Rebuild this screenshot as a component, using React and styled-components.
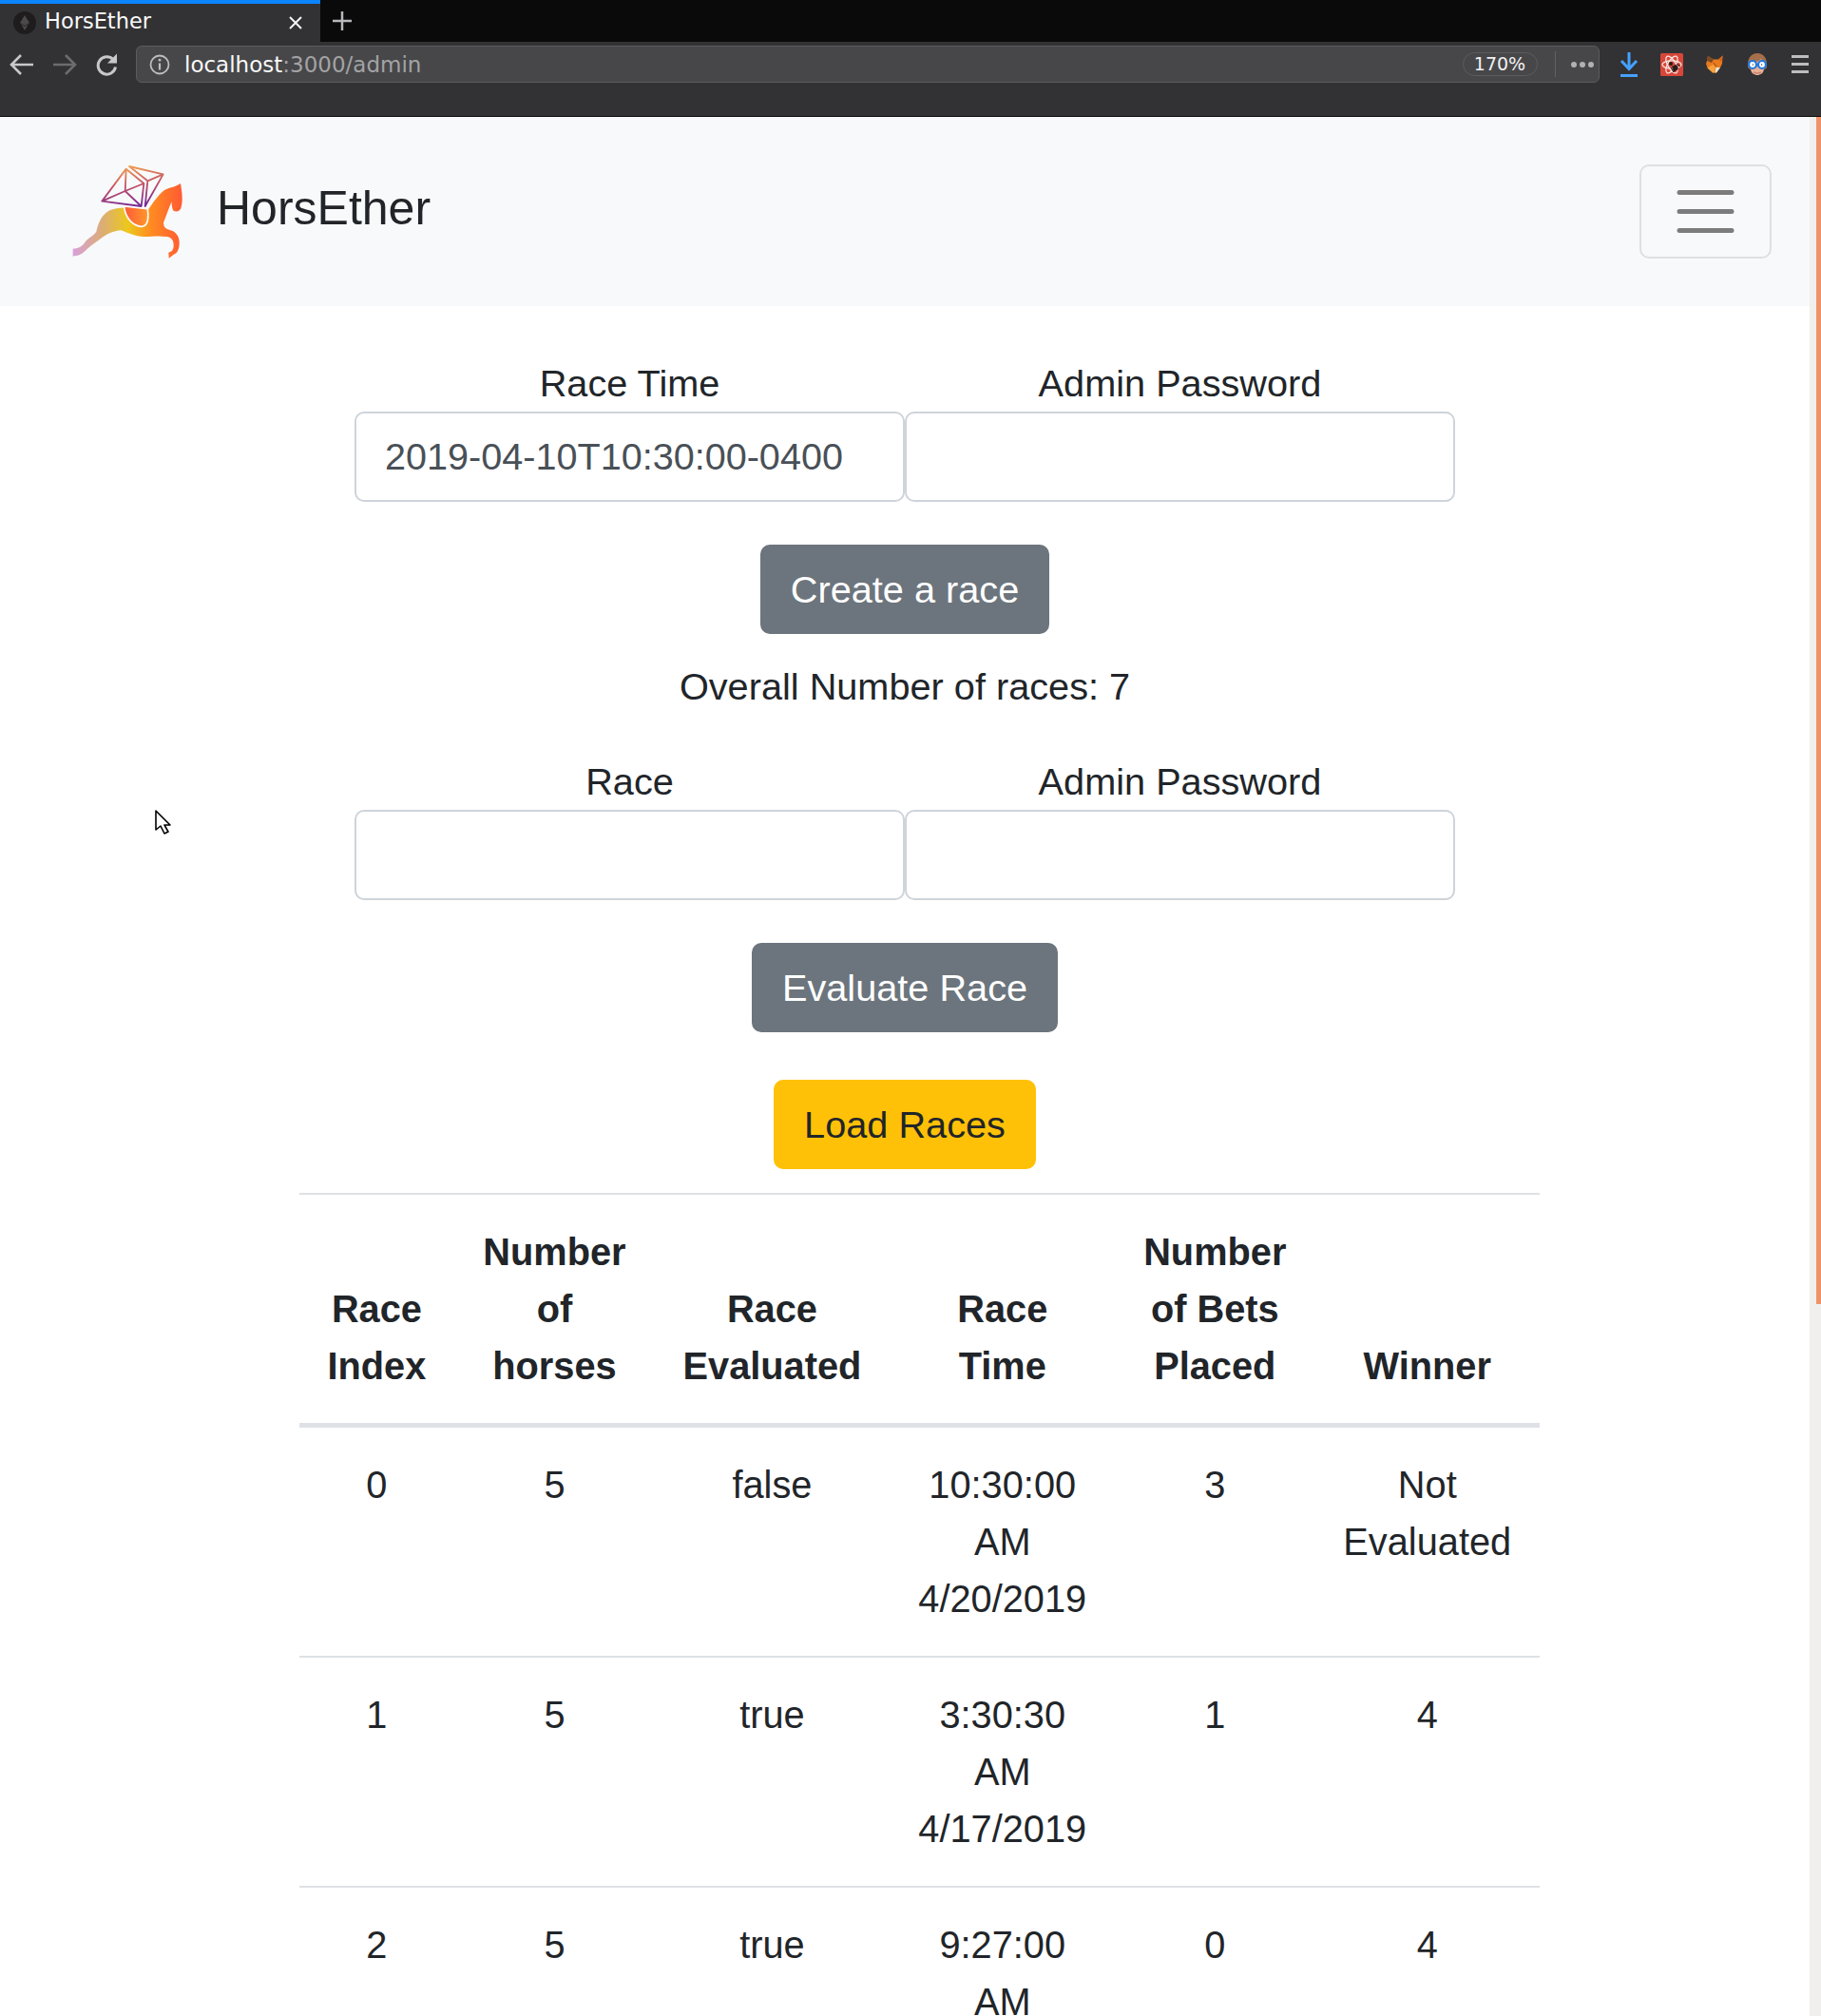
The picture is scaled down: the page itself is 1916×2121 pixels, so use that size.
import React from 'react'
import styled, { createGlobalStyle } from 'styled-components'

const Global = createGlobalStyle`
  html, body { margin: 0; padding: 0; height: 2121px; overflow: hidden; background: #fff; }
  * { box-sizing: border-box; }
`

const Window = styled.div`
  position: relative;
  width: 1916px;
  height: 2121px;
  display: flex;
  flex-direction: column;
  overflow: hidden;
  font-family: "Liberation Sans", Arial, sans-serif;
  color: #212529;
`

/* browser chrome */
const TabBar = styled.div`
  height: 44px;
  background: #0a0a0b;
  display: flex;
  font-family: "DejaVu Sans", sans-serif;
`
const Tab = styled.div`
  width: 337px;
  background: #323234;
  border-top: 4px solid #0a84ff;
  display: flex;
  align-items: center;
  padding: 0 18px 0 14px;
  color: #f9f9fa;
  font-size: 22.5px;
`
const TabTitle = styled.span`
  margin: -4px 0 0 9px;
  flex: 1;
`
const NewTab = styled.div`
  width: 46px;
  display: flex;
  align-items: center;
  justify-content: center;
`
const Toolbar = styled.div`
  height: 79px;
  background: #323234;
  border-bottom: 1px solid #0c0c0d;
  display: flex;
  align-items: flex-start;
  padding-top: 4px;
  font-family: "DejaVu Sans", sans-serif;
`
const ToolButton = styled.div`
  width: 45px;
  height: 39px;
  flex: none;
  display: flex;
  align-items: center;
  justify-content: center;
`
const UrlBar = styled.div`
  width: 1540px;
  height: 39px;
  margin: 0 8.5px 0 8px;
  background: #474749;
  border: 1px solid #5c5c5e;
  border-radius: 6px;
  display: flex;
  align-items: center;
  padding-left: 13px;
  font-size: 23px;
`
const Url = styled.span`
  margin-left: 15px;
  flex: 1;
  color: #a3a3a5;
  b { font-weight: 400; color: #f9f9fa; }
`
const ZoomPill = styled.span`
  width: 79px;
  height: 25px;
  border: 1px solid #5c5c5e;
  border-radius: 13px;
  color: #f0f0f2;
  font-size: 19px;
  line-height: 23px;
  text-align: center;
`
const Divider = styled.span`
  width: 1px;
  height: 27px;
  margin: 0 16px 0 18px;
  background: #5f6066;
`
const Dots = styled.span`
  display: flex;
  gap: 3px;
  margin-right: 5px;
  i {
    width: 6px;
    height: 6px;
    border-radius: 50%;
    background: #b1b1b3;
  }
`

/* page */
const Viewport = styled.div`
  flex: 1;
  min-height: 0;
  display: flex;
`
const Page = styled.div`
  flex: 1;
  min-width: 0;
  overflow: hidden;
`
const Scrollbar = styled.div`
  width: 12px;
  background: #f0efed;
  display: flex;
  justify-content: flex-end;
`
const Thumb = styled.div`
  width: 5px;
  height: 1249px;
  background: #f09268;
`
const Navbar = styled.nav`
  height: 199px;
  background: #f8f9fa;
  padding: 0 40px 0 50px;
  display: flex;
  align-items: center;
  justify-content: space-between;
`
const Brand = styled.a`
  display: flex;
  align-items: center;
  gap: 8px;
  font-size: 50px;
  line-height: 75px;
  margin-top: -6px;
`
const Toggler = styled.button`
  width: 139px;
  height: 99px;
  padding: 0;
  background: transparent;
  border: 2.5px solid rgba(0, 0, 0, 0.1);
  border-radius: 10px;
  display: flex;
  align-items: center;
  justify-content: center;
`
const Container = styled.main`
  width: 1350px;
  margin: 0 auto;
  padding: 51px 37.5px 0;
  font-size: 39.7px;
  line-height: 60px;
  text-align: center;
`
const FormRow = styled.div`
  width: 1158px;
  margin: ${p => p.$top || 0}px auto 0;
  display: grid;
  grid-template-columns: 1fr 1fr;
`
const Field = styled.label`
  display: block;
`
const Input = styled.input`
  display: block;
  width: 100%;
  height: 95px;
  padding: 15px 30px;
  border: 2.5px solid #ced4da;
  border-radius: 10px;
  background: #fff;
  color: #495057;
  font: inherit;
  font-size: 39.6px;
  outline: none;
`
const ButtonRow = styled.div`
  margin-top: ${p => p.$top}px;
  text-align: center;
`
const Btn = styled.button`
  height: 94px;
  padding: 0 30px;
  border: 2.5px solid ${p => (p.$warning ? '#ffc107' : '#6c757d')};
  border-radius: 10px;
  background: ${p => (p.$warning ? '#ffc107' : '#6c757d')};
  color: ${p => (p.$warning ? '#212529' : '#fff')};
  font: inherit;
  vertical-align: top;
`
const Count = styled.p`
  margin: 25px 0 0;
`
const Table = styled.table`
  width: 100%;
  margin-top: 25px;
  border-collapse: collapse;
  font-size: 39.75px;
  th, td {
    padding: 30px;
    text-align: center;
    border-top: 2.5px solid #dee2e6;
  }
  th {
    vertical-align: bottom;
    font-weight: 700;
    border-bottom: 5px solid #dee2e6;
  }
  td { vertical-align: top; }
`
const Cursor = styled.svg`
  position: absolute;
  left: 162px;
  top: 851px;
`

const Favicon = () => (
  <svg width="24" height="24" viewBox="0 0 24 24">
    <circle cx="12" cy="12" r="12" fill="#1e1c1d" />
    <path d="M12 4l5 8-5 3-5-3zM12 16l4-3-4 7-4-7z" fill="#4a4a4a" />
  </svg>
)
const Close = () => (
  <svg width="16" height="16" viewBox="0 0 16 16">
    <path d="M2 2l12 12M14 2L2 14" stroke="#f4f4f5" strokeWidth="2" />
  </svg>
)
const Plus = () => (
  <svg width="22" height="22" viewBox="0 0 22 22">
    <path d="M11 1v20M1 11h20" stroke="#b9b9bb" strokeWidth="2.5" />
  </svg>
)
const Arrow = ({ flip, color }) => (
  <svg width="26" height="26" viewBox="0 0 26 26" style={flip ? { transform: 'scaleX(-1)' } : undefined}>
    <path d="M2 13h23M12 3L2 13l10 10" fill="none" stroke={color} strokeWidth="2.6" />
  </svg>
)
const Reload = () => (
  <svg width="24" height="26" viewBox="0 0 24 26">
    <path d="M20.5 15.5A9.2 9.2 0 1 1 18 7.5" fill="none" stroke="#c8c8ca" strokeWidth="3" />
    <path d="M22 1.5v10H12z" fill="#c8c8ca" />
  </svg>
)
const Info = () => (
  <svg width="22" height="22" viewBox="0 0 22 22">
    <circle cx="11" cy="11" r="9.5" fill="none" stroke="#bdbdbf" strokeWidth="1.8" />
    <path d="M11 9.5v7" stroke="#bdbdbf" strokeWidth="2.2" />
    <circle cx="11" cy="6.2" r="1.4" fill="#bdbdbf" />
  </svg>
)
const Download = () => (
  <svg width="20" height="26" viewBox="0 0 20 26">
    <path d="M10 0v17M2 9l8 8.5L18 9" fill="none" stroke="#45a1ff" strokeWidth="3" />
    <path d="M1 24.5h18" stroke="#45a1ff" strokeWidth="3" />
  </svg>
)
const AtomBug = () => (
  <svg width="24" height="24" viewBox="0 0 24 24">
    <rect width="24" height="24" rx="1.5" fill="#d8463a" />
    <g fill="none" stroke="#f6e4de" strokeWidth="1.3">
      <ellipse cx="12" cy="12" rx="10" ry="4.2" />
      <ellipse cx="12" cy="12" rx="10" ry="4.2" transform="rotate(60 12 12)" />
      <ellipse cx="12" cy="12" rx="10" ry="4.2" transform="rotate(120 12 12)" />
    </g>
    <circle cx="11" cy="11" r="2" fill="#2a1a18" />
    <path d="M12 14l5-2 2 4-5 4z" fill="#2a1a18" />
    <path d="M11 15l3 5M15 12l3 6M17 11l4 3" stroke="#2a1a18" strokeWidth="1" />
  </svg>
)
const Fox = () => (
  <svg width="18" height="19" viewBox="0 0 18 19">
    <path d="M2 1L8 4.500L13 4.500L17.500 0.500L17 9L15 13L11 18.500L7 18.500L1.500 13.500L0 9L1 6Z" fill="#e87a1e" />
    <path d="M2 1L8 4.500L6 8L1 6Z" fill="#7c4a24" />
    <path d="M17.500 0.500L13 4.500L16.500 7Z" fill="#d4641a" />
    <path d="M1.500 13.500L7 10L10 13L9 18.500H7Z" fill="#f7a13c" />
    <path d="M10.500 13L15 13L11 18.500H9.500Z" fill="#e8e2d6" />
    <path d="M8 8L11 12" stroke="#9a4d14" strokeWidth="1" />
  </svg>
)
const Goggles = () => (
  <svg width="22" height="24" viewBox="0 0 22 24">
    <path d="M1 15C0 5 5 0 11 0s11 5 10 15l-2 2H3z" fill="#a4704a" />
    <path d="M4 10c4 0 8-1 11-4l3 5v5c0 5-4 7-7 7s-7-2-7-7z" fill="#e9b195" />
    <path d="M7 20c3 1.500 5 1.500 8 0" stroke="#c98470" strokeWidth="1.500" fill="none" />
    <circle cx="6" cy="12" r="4" fill="#fff" stroke="#1f78e0" strokeWidth="2.200" />
    <circle cx="16" cy="12" r="4" fill="#fff" stroke="#1f78e0" strokeWidth="2.200" />
    <circle cx="6.400" cy="12" r="0.700" fill="#444" />
    <circle cx="15.600" cy="12" r="0.700" fill="#444" />
  </svg>
)
const Menu = () => (
  <svg width="18" height="19" viewBox="0 0 18 19">
    <path d="M0 1.500h18M0 9.500h18M0 17.500h18" stroke="#bdbdbf" strokeWidth="3" />
  </svg>
)

const Logo = () => (
  <svg width="170" height="140" viewBox="0 -3 510 420">
    <defs>
      <linearGradient id="horse" x1="80" x2="425" y1="0" y2="0" gradientUnits="userSpaceOnUse">
        <stop offset="0" stopColor="#d8a0dc" />
        <stop offset="0.28" stopColor="#dcae72" />
        <stop offset="0.5" stopColor="#ecc81c" />
        <stop offset="0.72" stopColor="#ff8a22" />
        <stop offset="1" stopColor="#ff5a32" />
      </linearGradient>
      <linearGradient id="saddle" x1="243" x2="320" y1="0" y2="0" gradientUnits="userSpaceOnUse">
        <stop offset="0" stopColor="#ff5a3a" />
        <stop offset="1" stopColor="#ff9a28" />
      </linearGradient>
      <linearGradient id="gem" x1="250" x2="270" y1="72" y2="200" gradientUnits="userSpaceOnUse">
        <stop offset="0" stopColor="#f2a052" />
        <stop offset="0.5" stopColor="#c0506a" />
        <stop offset="1" stopColor="#742a96" />
      </linearGradient>
    </defs>
    <path
      d="M80 332C96 332 108 326 118 312C128 296 146 292 154 278C160 250 172 222 198 210C212 204 226 203 238 203L318 208C332 190 346 166 368 148C384 138 404 138 420 126C424 150 428 178 422 200C420 212 408 218 398 212C392 206 392 190 392 184C384 200 376 226 366 250C366 262 372 270 384 272C402 276 416 290 416 312C416 330 412 346 398 350C394 354 388 358 383 362L382 344C390 342 398 338 398 322C398 306 392 296 376 294C350 290 330 294 304 294C278 294 254 282 232 274C208 276 186 286 168 300C146 316 130 326 118 340C106 352 94 354 80 356Z"
      fill="url(#horse)"
    />
    <path d="M242 198C244 226 262 258 296 262C316 262 320 240 316 206Z" fill="url(#saddle)" stroke="#fff" strokeWidth="5" />
    <g fill="none" stroke="url(#gem)" strokeWidth="5.500" strokeLinejoin="round">
      <path d="M248 80L172 182L296 198L304 126ZM172 182L245 150L304 126M245 150L296 198M248 80L245 150" />
      <path d="M258 72L365 97L308 198L316 118ZM316 118L365 97" />
    </g>
  </svg>
)
const TogglerIcon = () => (
  <svg width="75" height="75" viewBox="0 0 30 30">
    <path d="M4 7h22M4 15h22M4 23h22" stroke="rgba(0,0,0,0.5)" strokeWidth="2" strokeLinecap="round" />
  </svg>
)

const rows = [
  ['0', '5', 'false', '10:30:00 AM 4/20/2019', '3', 'Not Evaluated'],
  ['1', '5', 'true', '3:30:30 AM 4/17/2019', '1', '4'],
  ['2', '5', 'true', '9:27:00 AM', '0', '4'],
]
const heads = ['Race Index', 'Number of horses', 'Race Evaluated', 'Race Time', 'Number of Bets Placed', 'Winner']

export default function App() {
  return (
    <Window>
      <Global />
      <TabBar>
        <Tab>
          <Favicon />
          <TabTitle>HorsEther</TabTitle>
          <Close />
        </Tab>
        <NewTab><Plus /></NewTab>
      </TabBar>
      <Toolbar>
        <ToolButton><Arrow color="#c8c8ca" /></ToolButton>
        <ToolButton><Arrow flip color="#6c6c6e" /></ToolButton>
        <ToolButton><Reload /></ToolButton>
        <UrlBar>
          <Info />
          <Url><b>localhost</b>:3000/admin</Url>
          <ZoomPill>170%</ZoomPill>
          <Divider />
          <Dots><i /><i /><i /></Dots>
        </UrlBar>
        <ToolButton><Download /></ToolButton>
        <ToolButton><AtomBug /></ToolButton>
        <ToolButton><Fox /></ToolButton>
        <ToolButton><Goggles /></ToolButton>
        <ToolButton><Menu /></ToolButton>
      </Toolbar>
      <Viewport>
        <Page>
          <Navbar>
            <Brand>
              <Logo />
              HorsEther
            </Brand>
            <Toggler><TogglerIcon /></Toggler>
          </Navbar>
          <Container>
            <FormRow>
              <Field>Race Time<Input defaultValue="2019-04-10T10:30:00-0400" /></Field>
              <Field>Admin Password<Input type="password" /></Field>
            </FormRow>
            <ButtonRow $top={45}><Btn>Create a race</Btn></ButtonRow>
            <Count>Overall Number of races: 7</Count>
            <FormRow $top={40}>
              <Field>Race<Input /></Field>
              <Field>Admin Password<Input type="password" /></Field>
            </FormRow>
            <ButtonRow $top={45}><Btn>Evaluate Race</Btn></ButtonRow>
            <ButtonRow $top={50}><Btn $warning>Load Races</Btn></ButtonRow>
            <Table>
              <thead>
                <tr>{heads.map(h => <th key={h}>{h}</th>)}</tr>
              </thead>
              <tbody>
                {rows.map(r => (
                  <tr key={r[0]}>{r.map((c, i) => <td key={i}>{c}</td>)}</tr>
                ))}
              </tbody>
            </Table>
          </Container>
        </Page>
        <Scrollbar><Thumb /></Scrollbar>
      </Viewport>
      <Cursor width="18" height="30" viewBox="0 0 18 30">
        <path d="M2 2v20l5-4 4 8 4-2-4-7h6z" fill="#fff" stroke="#000" strokeWidth="1.600" strokeLinejoin="round" />
      </Cursor>
    </Window>
  )
}
